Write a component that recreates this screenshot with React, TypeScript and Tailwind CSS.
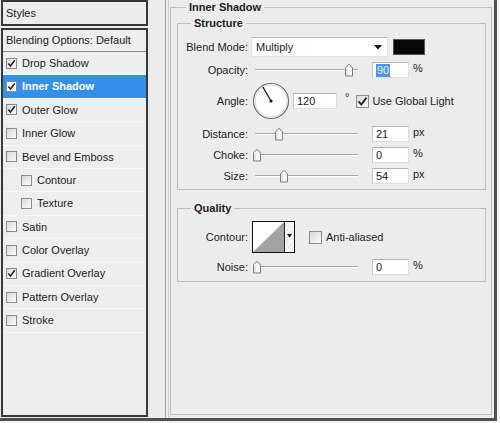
import React from "react";

type Item = { label: string; checked?: boolean; active?: boolean; indent?: boolean };

const items: Item[] = [
  { label: "Drop Shadow", checked: true },
  { label: "Inner Shadow", checked: true, active: true },
  { label: "Outer Glow", checked: true },
  { label: "Inner Glow" },
  { label: "Bevel and Emboss" },
  { label: "Contour", indent: true },
  { label: "Texture", indent: true },
  { label: "Satin" },
  { label: "Color Overlay" },
  { label: "Gradient Overlay", checked: true },
  { label: "Pattern Overlay" },
  { label: "Stroke" },
];

function CheckBox({ checked, big, white }: { checked?: boolean; big?: boolean; white?: boolean }) {
  return (
    <span
      className={`flex shrink-0 items-center justify-center border border-[#8b8b8b] ${
        big ? "h-[13px] w-[13px]" : "h-[11px] w-[11px]"
      } ${white ? "bg-white" : "bg-linear-to-br from-[#d9d9d9] to-[#fbfbfb]"}`}
    >
      {checked && (
        <svg width={big ? 11 : 9} height={big ? 11 : 9} viewBox="0 0 9 9">
          <path d="M1.3 4.4 L3.5 7 L7.8 1.3" fill="none" stroke="#1d2430" strokeWidth="1.5" />
        </svg>
      )}
    </span>
  );
}

function Slider({ thumb }: { thumb: number }) {
  return (
    <div className="relative ml-[0px] h-[16px] w-[106px] shrink-0">
      <div className="absolute left-[3px] right-0 top-[7px] h-px bg-[#a8a8a8] shadow-[0_1px_0_#ffffff]" />
      <svg className="absolute top-[1px]" style={{ left: thumb - 5 }} width="10" height="14" viewBox="0 0 10 14">
        <path d="M1.5 13 V5 L5 1.2 L8.5 5 V13 Z" fill="#f7f7f7" stroke="#7c7c7c" strokeWidth="1" />
        <path d="M3 12 V6" stroke="#d0d0d0" strokeWidth="1" />
      </svg>
    </div>
  );
}

function NumBox({ value, w = "w-[37px]", selected }: { value: string; w?: string; selected?: boolean }) {
  return (
    <div
      className={`flex h-[16px] ${w} shrink-0 items-center border border-[#dedede] border-t-[#b4b4b4] border-l-[#c4c4c4] bg-white pl-[3px]`}
    >
      {selected ? (
        <span className="bg-[#4c98e6] px-[1px] leading-[13px] text-[#dfeeff]">{value}</span>
      ) : (
        <span className="leading-[13px]">{value}</span>
      )}
    </div>
  );
}

function SliderRow({ label, thumb, value, unit, selected, mt }: { label: string; thumb: number; value: string; unit: string; selected?: boolean; mt: string }) {
  return (
    <div className={`flex h-[16px] items-center ${mt}`}>
      <span className="w-[70px] shrink-0 text-right">{label}</span>
      <span className="ml-[4px]">
        <Slider thumb={thumb} />
      </span>
      <span className="ml-[14px]">
        <NumBox value={value} selected={selected} />
      </span>
      <span className="ml-[4px] -mt-[3px]">{unit}</span>
    </div>
  );
}

export default function App() {
  return (
    <div className="h-[423px] w-[500px] bg-[#f3f3f3] font-['Liberation_Sans',Arial,sans-serif] text-[11px] text-[#1c1c1c]">
      <div className="flex h-[421px] w-[497px] border-b-[3px] border-r-[3px] border-[#505050] bg-[#ececec]">
        {/* Left panel */}
        <div className="ml-[1px] flex h-[417px] w-[147px] flex-col">
          <div className="flex h-[26px] items-center border-2 border-[#383838] pl-[3px]">Styles</div>
          <div className="mt-[2px] flex-1 border-2 border-[#383838] bg-[#eeeeee]">
            <div className="flex h-[22px] items-center border-b border-[#8a8a8a] pl-[3px]">Blending Options: Default</div>
            {items.map((it) => (
              <div
                key={it.label}
                className={`flex h-[23.4px] items-center gap-[5px] border-b border-[#f7f7f7] ${
                  it.indent ? "pl-[18px]" : "pl-[3px]"
                } ${it.active ? "bg-[#3390ea] font-bold text-white" : ""}`}
              >
                <CheckBox checked={it.checked} white={it.active} />
                <span>{it.label}</span>
              </div>
            ))}
          </div>
        </div>

        {/* Right area */}
        <div className="ml-[17px] h-full border-l border-[#a2a2a2] pl-[2px]">
          <div className="h-full border-l border-[#cfcfcf] pl-[1px]">
            <fieldset className="h-[415px] w-[322px] border border-[#bdbdbd] pl-[6px] pr-[5px]">
              <legend className="ml-[9px] px-[3px] font-bold leading-[14px]">Inner Shadow</legend>

              <fieldset className="mt-[2px] border border-[#bdbdbd] pb-[5px]">
                <legend className="ml-[13px] px-[3px] font-bold leading-[14px]">Structure</legend>

                {/* Blend mode */}
                <div className="mt-[7px] flex h-[20px] items-center">
                  <span className="w-[70px] shrink-0 text-right">Blend Mode:</span>
                  <div className="ml-[3px] flex h-[20px] w-[137px] items-center justify-between border border-[#e2e2e2] border-t-[#b8b8b8] bg-white pl-[4px] pr-[5px]">
                    <span>Multiply</span>
                    <svg width="8" height="5" viewBox="0 0 8 5">
                      <path d="M0 0 H8 L4 4.5 Z" fill="#111" />
                    </svg>
                  </div>
                  <div className="ml-[5px] h-[16px] w-[32px] border border-[#555] bg-[#080808]" />
                </div>

                <SliderRow label="Opacity:" thumb={97} value="90" unit="%" selected mt="mt-[5px]" />

                {/* Angle */}
                <div className="mt-[4px] flex h-[38px] items-center">
                  <span className="w-[70px] shrink-0 text-right">Angle:</span>
                  <svg className="ml-[4px] shrink-0" width="38" height="38" viewBox="0 0 38 38">
                    <circle cx="19" cy="19" r="17.5" fill="#fdfdfd" stroke="#6f6f6f" strokeWidth="1.2" />
                    <circle cx="19" cy="19" r="16" fill="none" stroke="#d8d8d8" strokeWidth="1" />
                    <line x1="19" y1="19" x2="10.8" y2="4.8" stroke="#222" strokeWidth="1.3" />
                    <circle cx="19" cy="19" r="1.6" fill="#111" />
                  </svg>
                  <span className="ml-[3px]">
                    <NumBox value="120" w="w-[44px]" />
                  </span>
                  <span className="ml-[8px] -mt-[8px]">°</span>
                  <span className="ml-[7px]">
                    <CheckBox checked big />
                  </span>
                  <span className="ml-[3px]">Use Global Light</span>
                </div>

                <SliderRow label="Distance:" thumb={27} value="21" unit="px" mt="mt-[6px]" />
                <SliderRow label="Choke:" thumb={5} value="0" unit="%" mt="mt-[5px]" />
                <SliderRow label="Size:" thumb={32} value="54" unit="px" mt="mt-[5px]" />
              </fieldset>

              <fieldset className="mt-[11px] border border-[#bdbdbd] pb-[6px]">
                <legend className="ml-[13px] px-[3px] font-bold leading-[14px]">Quality</legend>

                <div className="mt-[6px] flex h-[32px] items-center">
                  <span className="w-[70px] shrink-0 text-right">Contour:</span>
                  <svg className="ml-[4px] shrink-0" width="43" height="32" viewBox="0 0 43 32">
                    <rect x="0.5" y="0.5" width="42" height="31" fill="#ffffff" stroke="#111" />
                    <polygon points="1,31 32,1 32,31" fill="#a3a3a3" />
                    <line x1="32.5" y1="0.5" x2="32.5" y2="31.5" stroke="#222" />
                    <rect x="33" y="1" width="9" height="30" fill="#f4f4f4" />
                    <path d="M34 4h1M37 6h1M35 9h1M39 11h1M34 21h1M38 24h1M36 27h1M40 18h1" stroke="#c8c8c8" />
                    <path d="M35 13 H40 L37.5 16.5 Z" fill="#111" />
                  </svg>
                  <span className="ml-[14px]">
                    <CheckBox big />
                  </span>
                  <span className="ml-[4px]">Anti-aliased</span>
                </div>

                <SliderRow label="Noise:" thumb={5} value="0" unit="%" mt="mt-[6px]" />
              </fieldset>
            </fieldset>
          </div>
        </div>
      </div>
    </div>
  );
}
